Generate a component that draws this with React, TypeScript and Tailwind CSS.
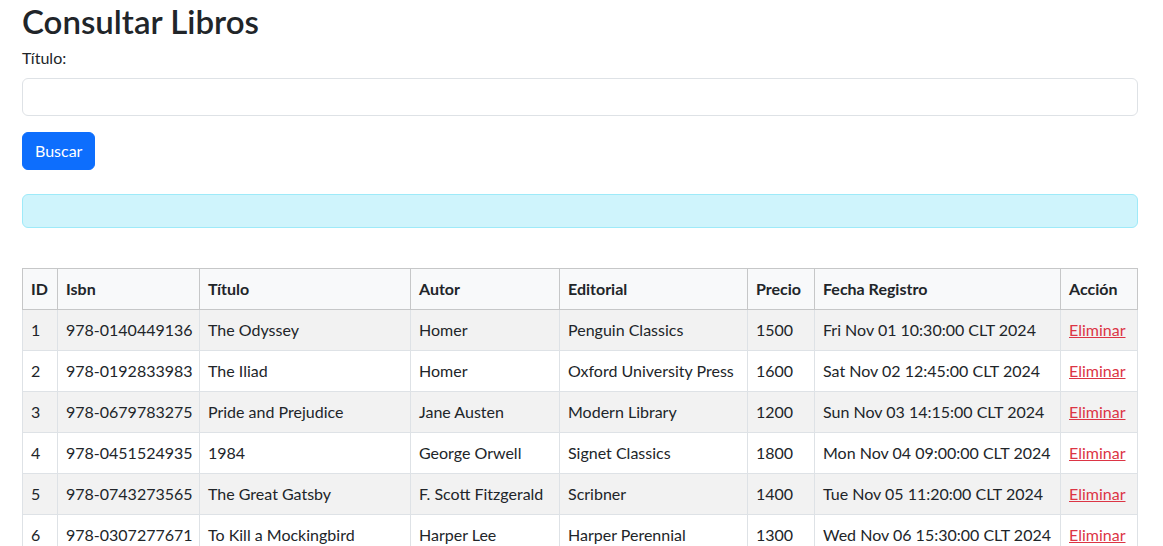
import React from 'react';

type Libro = {
	id: number;
	isbn: string;
	titulo: string;
	autor: string;
	editorial: string;
	precio: number;
	fecha: string;
};

const libros: Libro[] = [
	{ id: 1, isbn: '978-0140449136', titulo: 'The Odyssey', autor: 'Homer', editorial: 'Penguin Classics', precio: 1500, fecha: 'Fri Nov 01 10:30:00 CLT 2024' },
	{ id: 2, isbn: '978-0192833983', titulo: 'The Iliad', autor: 'Homer', editorial: 'Oxford University Press', precio: 1600, fecha: 'Sat Nov 02 12:45:00 CLT 2024' },
	{ id: 3, isbn: '978-0679783275', titulo: 'Pride and Prejudice', autor: 'Jane Austen', editorial: 'Modern Library', precio: 1200, fecha: 'Sun Nov 03 14:15:00 CLT 2024' },
	{ id: 4, isbn: '978-0451524935', titulo: '1984', autor: 'George Orwell', editorial: 'Signet Classics', precio: 1800, fecha: 'Mon Nov 04 09:00:00 CLT 2024' },
	{ id: 5, isbn: '978-0743273565', titulo: 'The Great Gatsby', autor: 'F. Scott Fitzgerald', editorial: 'Scribner', precio: 1400, fecha: 'Tue Nov 05 11:20:00 CLT 2024' },
	{ id: 6, isbn: '978-0307277671', titulo: 'To Kill a Mockingbird', autor: 'Harper Lee', editorial: 'Harper Perennial', precio: 1300, fecha: 'Wed Nov 06 15:30:00 CLT 2024' },
];

// anchos de columna tomados de la captura
const columnas = [
	{ label: 'ID', w: 'w-[35px]' },
	{ label: 'Isbn', w: 'w-[142px]' },
	{ label: 'Título', w: 'w-[211px]' },
	{ label: 'Autor', w: 'w-[149px]' },
	{ label: 'Editorial', w: 'w-[188px]' },
	{ label: 'Precio', w: 'w-[67px]' },
	{ label: 'Fecha Registro', w: 'w-[246px]' },
	{ label: 'Acción', w: 'w-[77px]' },
];

const celda = 'border border-[#dee2e6] px-2 py-2 h-[41px] whitespace-nowrap overflow-hidden';

const App = () => {
	return (
		<div className="pl-[22px] text-[16px] leading-6 text-[#212529] font-['Lato','Segoe_UI',sans-serif] bg-white h-[546px] overflow-hidden">
			<div className="w-[1116px]">
				<h1 className="text-[33px] leading-[38px] font-semibold mt-[2px] mb-[6px]">Consultar Libros</h1>
				<label className="block mb-2">Título:</label>
				<input type="text" className="block w-full h-[38px] border border-[#dee2e6] rounded-md px-3 mb-4 outline-none" />
				<button className="h-[38px] px-3 rounded-md bg-[#0d6efd] text-white border border-[#0d6efd] mb-6">Buscar</button>
				<div className="h-[34px] rounded-md bg-[#cff4fc] border border-[#9eeaf9] mb-10"></div>
				<table className="w-[1116px] table-fixed border-collapse">
					<thead>
						<tr className="bg-[#f8f9fa]">
							{columnas.map((c) => (
								<th key={c.label} className={`${c.w} border border-[#c6c7c8] px-2 py-2 h-[41px] text-left font-bold`}>
									{c.label}
								</th>
							))}
						</tr>
					</thead>
					<tbody>
						{libros.map((l, i) => (
							<tr key={l.id} className={i % 2 === 0 ? 'bg-[#f2f2f2]' : 'bg-white'}>
								<td className={celda}>{l.id}</td>
								<td className={celda}>{l.isbn}</td>
								<td className={celda}>{l.titulo}</td>
								<td className={celda}>{l.autor}</td>
								<td className={celda}>{l.editorial}</td>
								<td className={celda}>{l.precio}</td>
								<td className={celda}>{l.fecha}</td>
								<td className={celda}>
									<a href="#" className="text-[#dc3545] underline">Eliminar</a>
								</td>
							</tr>
						))}
					</tbody>
				</table>
			</div>
		</div>
	);
};

export default App;
